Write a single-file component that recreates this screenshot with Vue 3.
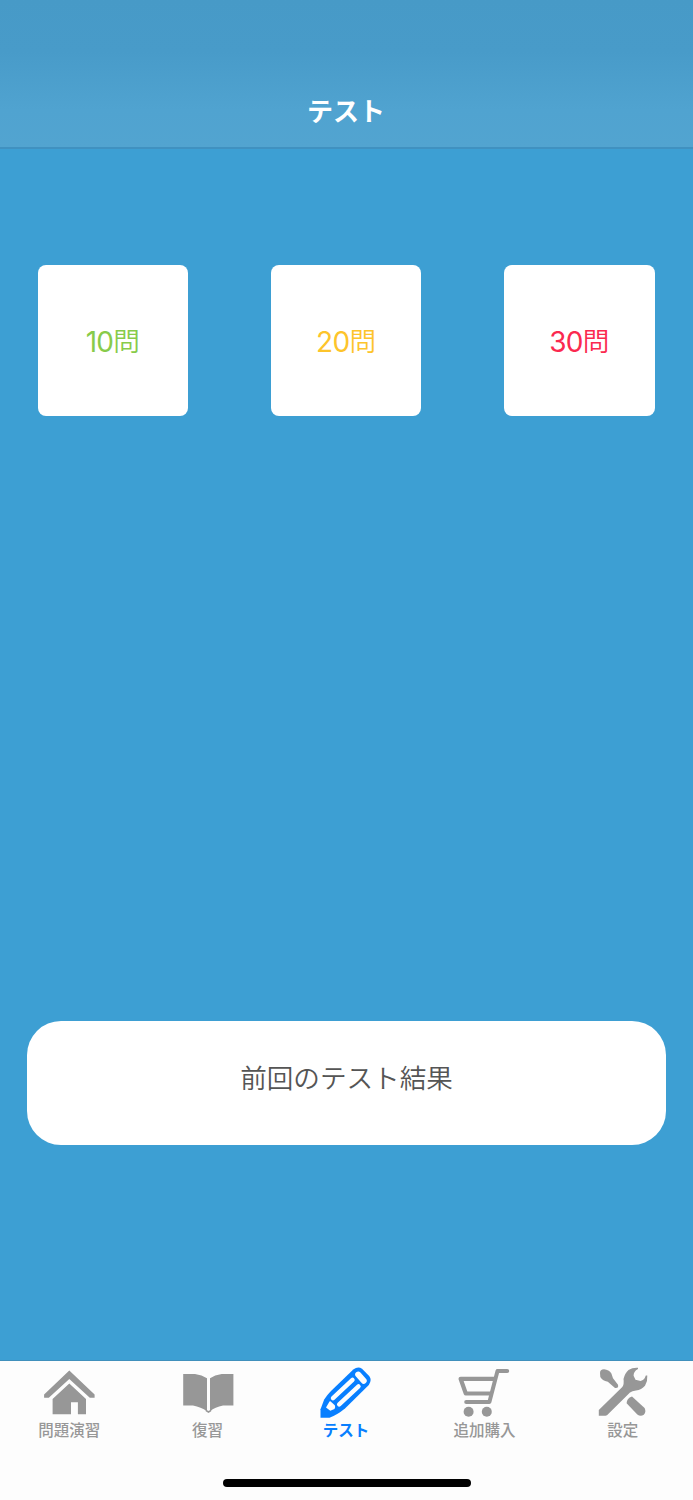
<script setup>
const tests = [
  { count: '10', tone: 'green' },
  { count: '20', tone: 'yellow' },
  { count: '30', tone: 'red' },
]
const tabs = [
  { label: '問題演習', icon: 'home' },
  { label: '復習', icon: 'book' },
  { label: 'テスト', icon: 'pencil', active: true },
  { label: '追加購入', icon: 'cart' },
  { label: '設定', icon: 'tools' },
]
</script>

<template>
  <div class="screen">
    <header class="nav"><h1>テスト</h1></header>
    <main class="content">
      <div class="tests">
        <button v-for="t in tests" :key="t.count" class="test" :class="t.tone"><span class="num">{{ t.count }}</span><span class="unit">問</span></button>
      </div>
      <button class="result">前回のテスト結果</button>
    </main>
    <footer class="bar">
      <nav class="tabs">
        <a v-for="t in tabs" :key="t.icon" class="tab" :class="{ active: t.active }">
          <svg class="icon" viewBox="0 0 52 52">
            <g v-if="t.icon === 'home'" fill="currentColor">
              <path d="M26.3 3.5 51.6 27.5V30.7H46.8L26.3 12 5.8 30.7H1.1V27.5Z" />
              <path d="M26.3 16.5 43 32V47.3H34.9V35.3H28V47.3H9.6V32Z" />
            </g>
            <g v-else-if="t.icon === 'book'" fill="currentColor">
              <path d="M1.2 7H13Q20 8 25 11.3V44.3Q19 40 11 38.5H1.2Z" />
              <path d="M51.4 7H39.7Q32.7 8 28 11.3V44.3Q33 40 41 38.5H51.4Z" />
              <path d="M23.7 42.5 26.5 44 29.2 42.5V44.3L26.5 46 23.7 44.3Z" />
            </g>
            <g v-else-if="t.icon === 'pencil'">
              <path fill="currentColor" d="M.5 50.7V42.2L4.2 32.5Q7 28 11 24L33.3 2.6Q38-1.2 42 1.8L49.2 9Q52.3 13 48.8 18L25 41.5Q17 48 9.5 50.7Z" />
              <g fill="none" stroke="#fdfdfd" stroke-linecap="round">
                <path stroke-width="6" d="M38.2 7.6 43.7 13.7" />
                <path stroke-width="4.4" d="M13 31.2 32.5 12.9M19.2 37.4 38.5 19.4" />
              </g>
              <path fill="#fdfdfd" d="M9.5 34.5Q10.5 34 11.5 35.3L14.8 38.3Q15.8 40 14.5 42L10.3 43.8 6 40.5Z" />
            </g>
            <g v-else-if="t.icon === 'cart'" fill="none" stroke="currentColor" stroke-linejoin="round">
              <path stroke-width="4" d="M49.2 3.9H39.5L31.4 34.9H8.2" stroke-linecap="round" />
              <path stroke-width="4.2" d="M37 11.8H2.6L7.8 26.5H33.4" />
              <circle cx="10.6" cy="44.7" r="5" fill="currentColor" stroke="none" />
              <circle cx="28.8" cy="44.7" r="5" fill="currentColor" stroke="none" />
            </g>
            <g v-else fill="currentColor">
              <path d="M1.8 48.8V43L25.3 20Q27.3 17 26.5 12 28 6 31.5 3 35.5 .3 41 .7L41 2Q36.4 4.5 36.6 8.7L38.5 12.8 43.5 14.1Q47.5 13 48.8 8.5H50.3Q50.8 14 48 18.8 44.5 22.8 39 23.5 35 23.8 33 25.5L10 48.3 8.5 48.8Z" />
              <path d="M3 6Q3 2.3 7 2.3 12 2.6 14.4 6.5L16 11.3 21 17.8Q22 21.5 18 21L10.8 14.7Q5 13.5 3.3 10Z" />
              <path d="M35 29.5 47.6 41Q49.5 45 46.8 47.7 43.5 49.7 40.3 47.4L29.6 36.3Q29.8 31 35 29.5Z" />
            </g>
          </svg>
          <span class="label">{{ t.label }}</span>
        </a>
      </nav>
      <div class="home-indicator"></div>
    </footer>
  </div>
</template>

<style>
body { margin: 0; }
</style>

<style scoped>
.screen {
  width: 693px;
  height: 1500px;
  display: flex;
  flex-direction: column;
  background: #3d9fd3;
  font-family: "Noto Sans CJK JP", sans-serif;
}
.nav {
  box-sizing: border-box;
  height: 149px;
  padding: 92px 1px 0 0;
  border-bottom: 2px solid #4091c0;
  background: linear-gradient(#479ac7, #489bc9 35%, #50a3d0 75%, #52a4d0);
  text-align: center;
}
h1 {
  margin: 0;
  font-size: 26px;
  line-height: 36px;
  font-weight: 700;
  color: #fff;
}
.content {
  flex: 1;
  display: flex;
  flex-direction: column;
  justify-content: space-between;
  padding: 116px 27px 215px;
}
button {
  border: 0;
  padding: 0;
  background: #fff;
  font-family: inherit;
  font-weight: 350;
}
.tests {
  display: flex;
  justify-content: space-between;
  padding: 0 11.5px 0 10.5px;
}
.test {
  display: flex;
  align-items: center;
  justify-content: center;
  width: 150.5px;
  height: 151px;
  border-radius: 8px;
  font-size: 26.6px;
  line-height: 36px;
}
.num {
  padding-top: 2px;
  font-family: Inter, sans-serif;
  font-weight: 400;
  font-size: 28px;
  letter-spacing: -0.7px;
}
.unit { padding-bottom: 2px; }
.green { color: #88cb4a; }
.yellow { color: #fdc42b; }
.red { color: #fb294f; }
.result {
  height: 124px;
  padding-bottom: 13px;
  border-radius: 34px;
  font-size: 26.6px;
  color: #555;
}
.bar {
  box-sizing: border-box;
  height: 140px;
  border-top: 1px solid #4090bc;
  background: #fdfdfd;
}
.tabs {
  display: flex;
  height: 118px;
  padding-right: 1px;
}
.tab {
  flex: 1;
  display: flex;
  flex-direction: column;
  align-items: center;
  padding-top: 6px;
  color: #979797;
}
.active { color: #087fff; }
.icon { width: 52px; height: 52px; }
.label {
  margin-top: -1px;
  font-size: 15.5px;
  line-height: 22px;
  font-weight: 500;
}
.active .label { font-weight: 700; }
.home-indicator {
  width: 248px;
  height: 8px;
  margin: 0 auto;
  border-radius: 4px;
  background: #000;
}
</style>
